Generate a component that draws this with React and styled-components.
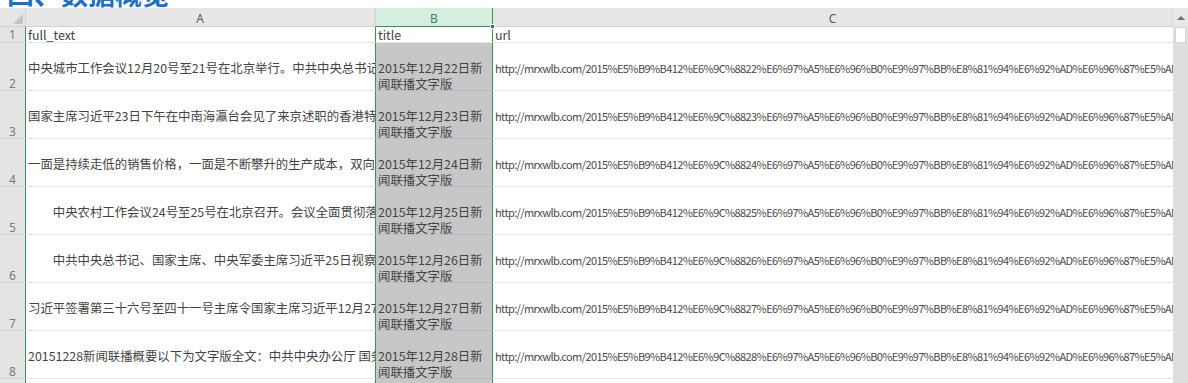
import React from 'react';
import styled, { createGlobalStyle, css } from 'styled-components';

const GREEN = '#3d8e5f';

const GlobalStyle = createGlobalStyle`
  html, body { margin: 0; padding: 0; background: #ffffff; }
  body { font-family: "Noto Sans CJK SC", "Noto Sans", sans-serif; }
  * { box-sizing: border-box; }
`;

const Page = styled.div`
  width: 1188px;
  height: 383px;
  overflow: hidden;
`;

const TitleClip = styled.div`
  height: 8px;
  overflow: hidden;
`;

const Title = styled.h2`
  margin: -20px 0 0 7px;
  font-size: 27px;
  line-height: 28px;
  font-weight: 700;
  color: #1d6fc5;
  white-space: nowrap;
`;

const Body = styled.div`
  display: flex;
  align-items: stretch;
`;

const Sheet = styled.div`
  flex: none;
  display: grid;
  grid-template-columns: 26px 349px 118px 680px;
  grid-template-rows: 19px 16px repeat(8, 48px);
`;

const Corner = styled.div`
  position: relative;
  background: #e6e6e6;
  border-right: 1px solid #d6d6d6;
  border-bottom: 1px solid #d0d0d0;
  &::after {
    content: '';
    position: absolute;
    right: 2px;
    bottom: 2px;
    width: 0;
    height: 0;
    border-left: 10px solid transparent;
    border-bottom: 10px solid #c3c3c3;
  }
`;

const ColHead = styled.div`
  position: relative;
  height: 19px;
  padding-top: 4px;
  text-align: center;
  font-family: "Noto Sans", "Liberation Sans", sans-serif;
  font-size: 12px;
  line-height: 14px;
  background: ${(p) => (p.$active ? '#d4eee0' : '#e6e6e6')};
  color: ${(p) => (p.$active ? '#4a7d5c' : '#5c5c5c')};
  border-right: 1px solid ${(p) => (p.$active ? GREEN : '#d8d8d8')};
  border-left: ${(p) => (p.$active ? `1px solid #d8d8d8` : 'none')};
  border-bottom: 1px solid ${(p) => (p.$active ? GREEN : '#d0d0d0')};
`;

const Handle = styled.span`
  position: absolute;
  right: -3px;
  bottom: -3px;
  width: 5px;
  height: 5px;
  background: #2f7a4f;
  border: 1px solid #ffffff;
  z-index: 2;
`;

const RowHead = styled.div`
  background: #e4e4e4;
  color: #7a7a7a;
  font-family: "Noto Sans", "Liberation Sans", sans-serif;
  font-size: 12px;
  line-height: 16px;
  text-align: center;
  padding-top: ${(p) => (p.$first ? '0' : '33px')};
  border-right: 1px solid ${GREEN};
  border-bottom: 1px solid #d3d3d3;
  overflow: hidden;
`;

const colStyles = {
  A: css`
    border-right: none;
  `,
  B: css`
    border-left: 1px solid ${GREEN};
    border-right: 1px solid ${GREEN};
  `,
  C: css`
    border-right: none;
  `,
};

const Cell = styled.div`
  overflow: hidden;
  white-space: nowrap;
  font-size: 12.4px;
  line-height: 16px;
  color: #444444;
  padding: ${(p) => (p.$first ? '0 2px' : '17px 2px 0')};
  background: ${(p) => (p.$col === 'B' && !p.$first ? '#c7c7c7' : '#ffffff')};
  border-bottom: 1px solid ${(p) => (p.$col === 'B' && !p.$first ? '#bcbcbc' : '#e4e4e4')};
  ${(p) => colStyles[p.$col]}
`;

const Line = styled.div`
  white-space: nowrap;
`;

const UrlText = styled.span`
  font-size: 11px;
  letter-spacing: -0.6px;
  color: #4a4a4a;
`;

const Scrollbar = styled.div`
  flex: none;
  width: 15px;
  display: flex;
  flex-direction: column;
  background: #dedede;
  height: 375px;
`;

const ScrollUp = styled.div`
  height: 19px;
  background: #e8e8e8;
  display: flex;
  align-items: center;
  justify-content: center;
  &::before {
    content: '';
    width: 0;
    height: 0;
    border-left: 4px solid transparent;
    border-right: 4px solid transparent;
    border-bottom: 4px solid #6e6e6e;
  }
`;

const Thumb = styled.div`
  height: 16px;
  margin: 0 2px 0 2px;
  background: #ffffff;
  border: 1px solid #d6d6d6;
`;

const Track = styled.div`
  flex: 1;
`;

const urlFor = (day) =>
  `http://mrxwlb.com/2015%E5%B9%B412%E6%9C%88${day}%E6%97%A5%E6%96%B0%E9%97%BB%E8%81%94%E6%92%AD%E6%96%87%E5%AD%97%E7%89%88/`;

const rows = [
  { n: 2, day: 22, text: '中央城市工作会议12月20号至21号在北京举行。中共中央总书记、国家主席、中央军委主席习近平' },
  { n: 3, day: 23, text: '国家主席习近平23日下午在中南海瀛台会见了来京述职的香港特别行政区行政长官梁振英' },
  { n: 4, day: 24, text: '一面是持续走低的销售价格，一面是不断攀升的生产成本，双向挤压之下' },
  { n: 5, day: 25, text: '　　中央农村工作会议24号至25号在北京召开。会议全面贯彻落实党的十八大精神' },
  { n: 6, day: 26, text: '　　中共中央总书记、国家主席、中央军委主席习近平25日视察解放军报社' },
  { n: 7, day: 27, text: '习近平签署第三十六号至四十一号主席令国家主席习近平12月27日签署' },
  { n: 8, day: 28, text: '20151228新闻联播概要以下为文字版全文：中共中央办公厅 国务院办公厅' },
];

export default function App() {
  return (
    <Page>
      <GlobalStyle />
      <TitleClip>
        <Title>四、数据概览</Title>
      </TitleClip>
      <Body>
        <Sheet>
          <Corner />
          <ColHead>A</ColHead>
          <ColHead $active>
            B
            <Handle />
          </ColHead>
          <ColHead>C</ColHead>

          <RowHead $first>1</RowHead>
          <Cell $col="A" $first>full_text</Cell>
          <Cell $col="B" $first>title</Cell>
          <Cell $col="C" $first>url</Cell>

          {rows.map((r) => (
            <React.Fragment key={r.n}>
              <RowHead>{r.n}</RowHead>
              <Cell $col="A">{r.text}</Cell>
              <Cell $col="B">
                <Line>{`2015年12月${r.day}日新`}</Line>
                <Line>闻联播文字版</Line>
              </Cell>
              <Cell $col="C">
                <UrlText>{urlFor(r.day)}</UrlText>
              </Cell>
            </React.Fragment>
          ))}

          <RowHead>9</RowHead>
          <Cell $col="A" />
          <Cell $col="B" />
          <Cell $col="C" />
        </Sheet>
        <Scrollbar>
          <ScrollUp />
          <Thumb />
          <Track />
        </Scrollbar>
      </Body>
    </Page>
  );
}
